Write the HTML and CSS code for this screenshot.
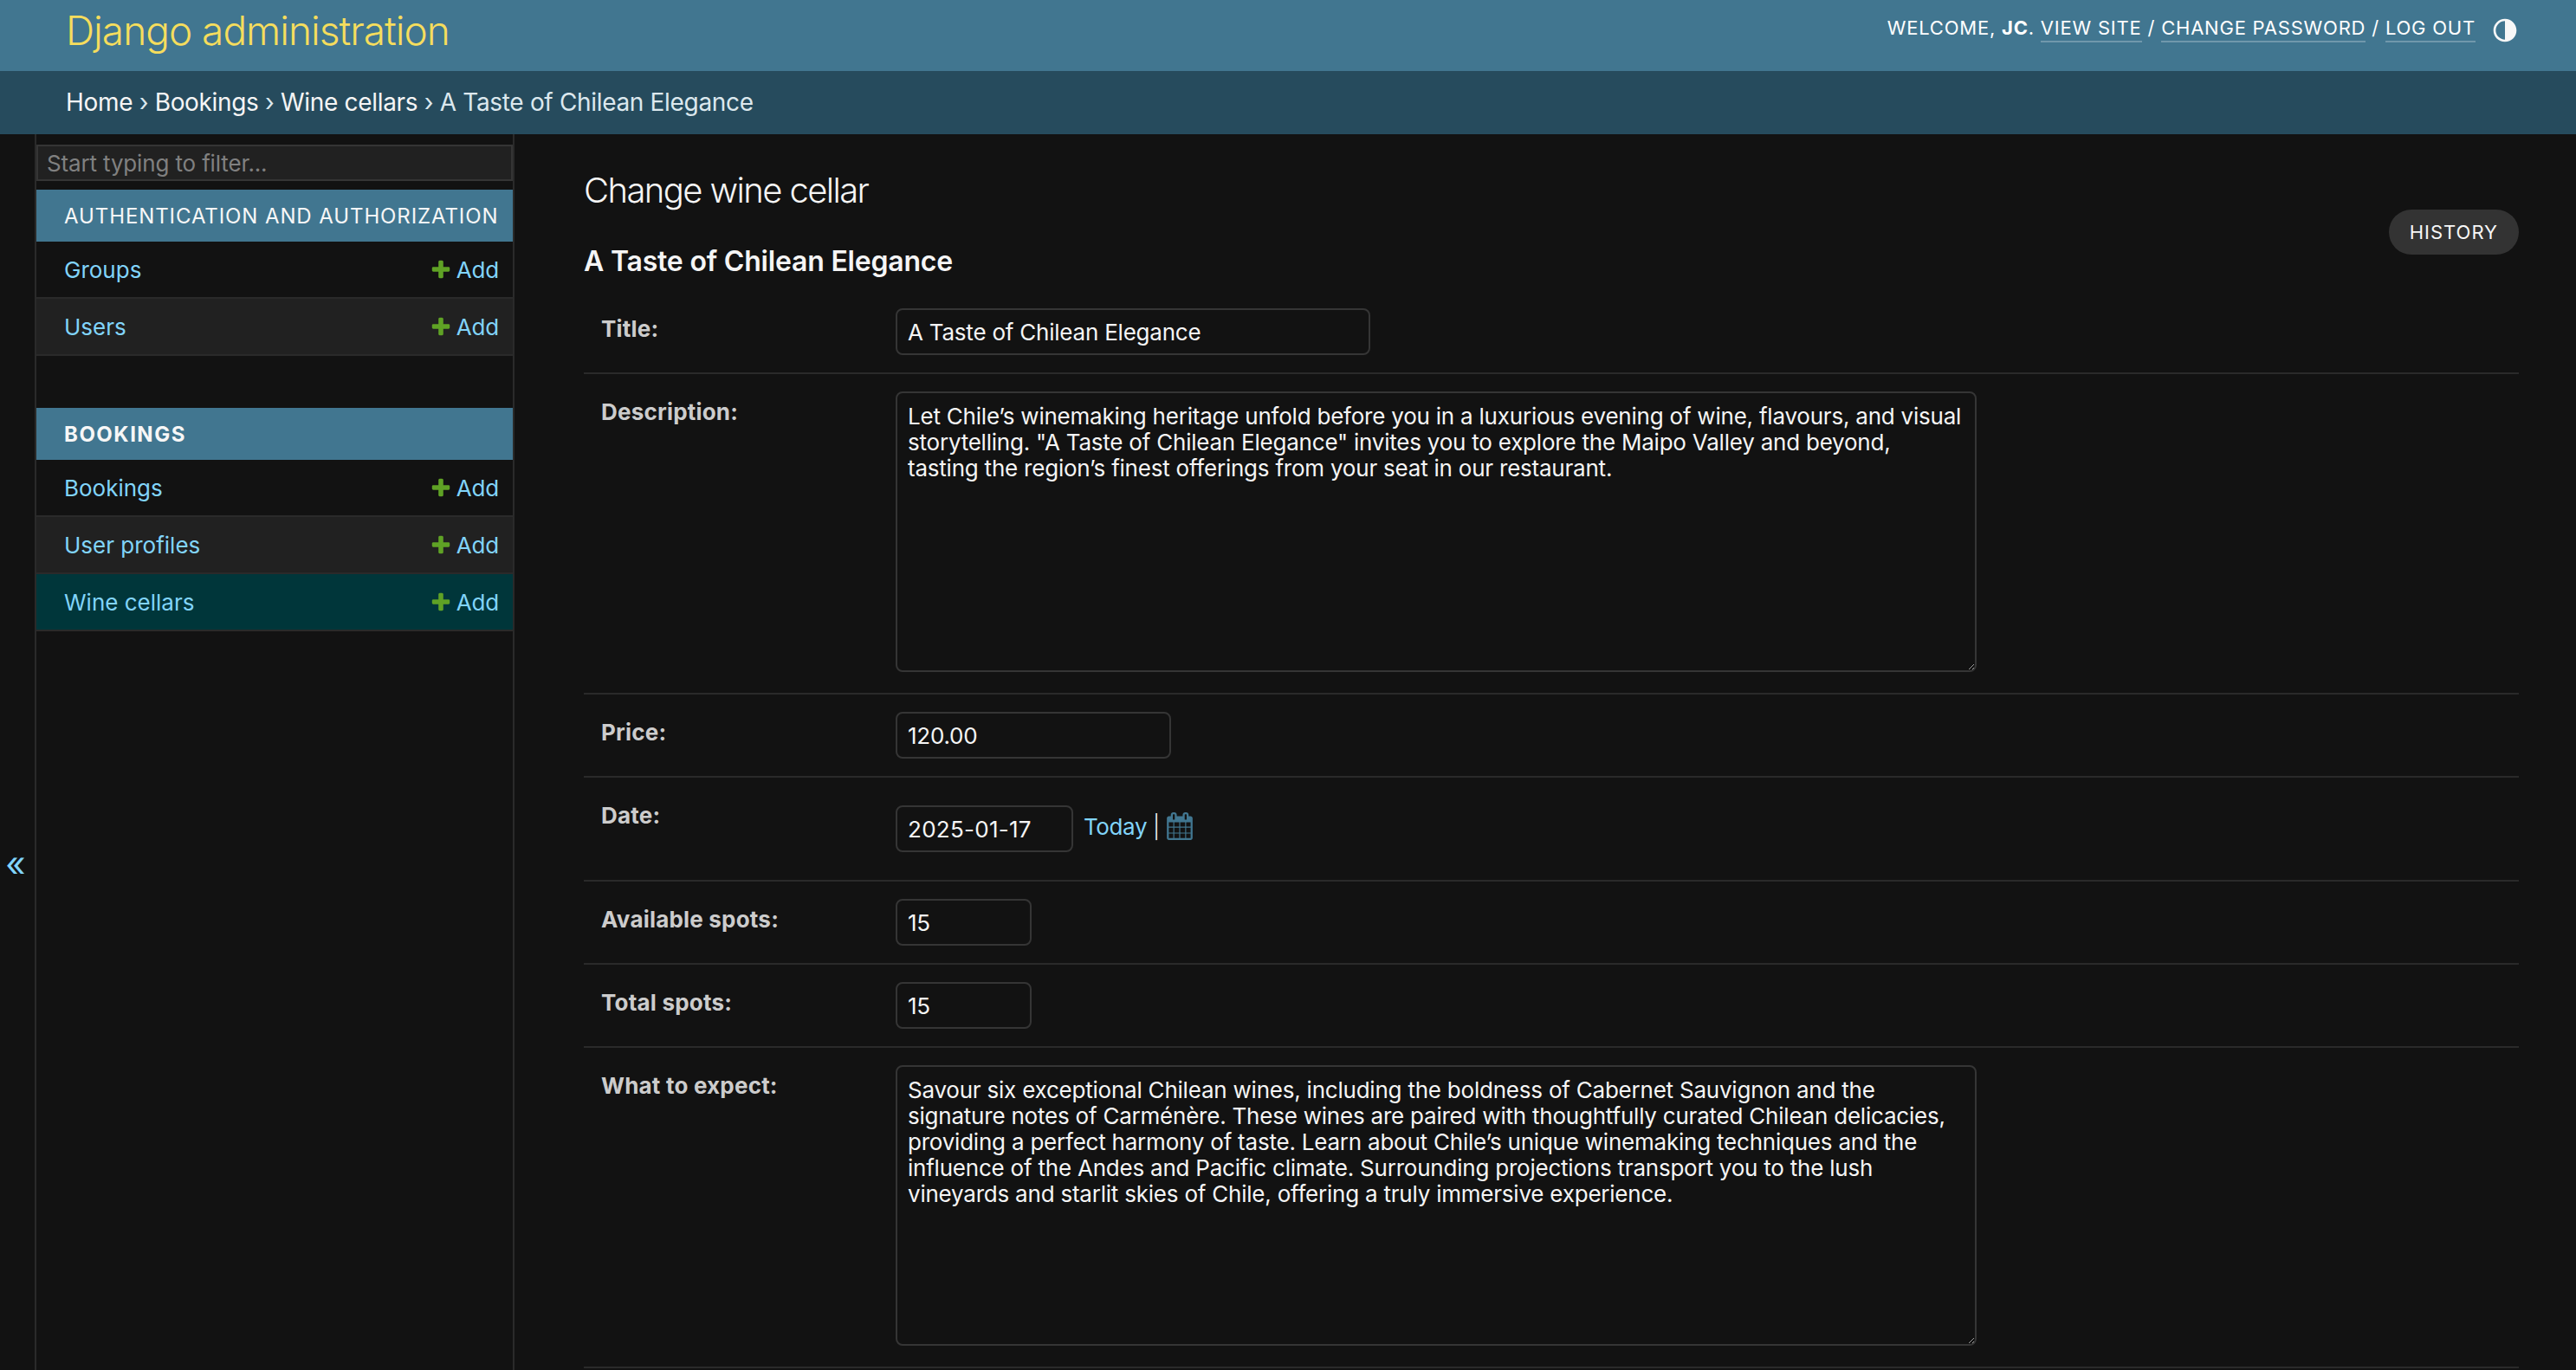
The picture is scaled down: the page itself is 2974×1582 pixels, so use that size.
FILE: index.html
```html
<!DOCTYPE html>
<html>
<head lang="en">
    <meta charset="UTF-8">
    <title>Change wine cellar | Django site admin</title>
    <link rel="stylesheet" href="styles.css">
</head>
<body>
<div class="page">
    <div class="header">
        <h1 class="branding"><a href="#">Django administration</a></h1>
        <div class="user-tools">
            <div>Welcome, <strong>JC</strong>. <a href="#">View site</a> / <a href="#">Change password</a> / <a href="#">Log out</a></div>
            <svg class="theme-icon" viewBox="0 0 24 24"><path d="M12 22C6.477 22 2 17.523 2 12S6.477 2 12 2s10 4.477 10 10-4.477 10-10 10zm0-2V4a8 8 0 1 0 0 16z"/></svg>
        </div>
    </div>
    <div class="breadcrumbs">
        <a href="#">Home</a> › <a href="#">Bookings</a> › <a href="#">Wine cellars</a> › A Taste of Chilean Elegance
    </div>
    <div class="main">
        <div class="toggle-nav">«</div>
        <div class="sidebar">
            <input class="nav-filter" type="text" placeholder="Start typing to filter...">
            <div class="app-module">
                <div class="caption">Authentication and Authorization</div>
                <div class="model-row">
                    <a href="#">Groups</a>
                    <a href="#" class="addlink"><svg viewBox="0 0 1792 1792"><path d="M1600 796v192q0 40-28 68t-68 28h-416v416q0 40-28 68t-68 28h-192q-40 0-68-28t-28-68v-416h-416q-40 0-68-28t-28-68v-192q0-40 28-68t68-28h416v-416q0-40 28-68t68-28h192q40 0 68 28t28 68v416h416q40 0 68 28t28 68z"/></svg>Add</a>
                </div>
                <div class="model-row alt">
                    <a href="#">Users</a>
                    <a href="#" class="addlink"><svg viewBox="0 0 1792 1792"><path d="M1600 796v192q0 40-28 68t-68 28h-416v416q0 40-28 68t-68 28h-192q-40 0-68-28t-28-68v-416h-416q-40 0-68-28t-28-68v-192q0-40 28-68t68-28h416v-416q0-40 28-68t68-28h192q40 0 68 28t28 68v416h416q40 0 68 28t28 68z"/></svg>Add</a>
                </div>
            </div>
            <div class="app-module">
                <div class="caption bold">Bookings</div>
                <div class="model-row">
                    <a href="#">Bookings</a>
                    <a href="#" class="addlink"><svg viewBox="0 0 1792 1792"><path d="M1600 796v192q0 40-28 68t-68 28h-416v416q0 40-28 68t-68 28h-192q-40 0-68-28t-28-68v-416h-416q-40 0-68-28t-28-68v-192q0-40 28-68t68-28h416v-416q0-40 28-68t68-28h192q40 0 68 28t28 68v416h416q40 0 68 28t28 68z"/></svg>Add</a>
                </div>
                <div class="model-row alt">
                    <a href="#">User profiles</a>
                    <a href="#" class="addlink"><svg viewBox="0 0 1792 1792"><path d="M1600 796v192q0 40-28 68t-68 28h-416v416q0 40-28 68t-68 28h-192q-40 0-68-28t-28-68v-416h-416q-40 0-68-28t-28-68v-192q0-40 28-68t68-28h416v-416q0-40 28-68t68-28h192q40 0 68 28t28 68v416h416q40 0 68 28t28 68z"/></svg>Add</a>
                </div>
                <div class="model-row current">
                    <a href="#">Wine cellars</a>
                    <a href="#" class="addlink"><svg viewBox="0 0 1792 1792"><path d="M1600 796v192q0 40-28 68t-68 28h-416v416q0 40-28 68t-68 28h-192q-40 0-68-28t-28-68v-416h-416q-40 0-68-28t-28-68v-192q0-40 28-68t68-28h416v-416q0-40 28-68t68-28h192q40 0 68 28t28 68v416h416q40 0 68 28t28 68z"/></svg>Add</a>
                </div>
            </div>
        </div>
        <div class="content">
            <div class="title-bar">
                <div>
                    <h1 class="page-title">Change wine cellar</h1>
                    <h2 class="object-title">A Taste of Chilean Elegance</h2>
                </div>
                <a href="#" class="history">History</a>
            </div>
            <div class="form-row">
                <label class="field-label">Title:</label>
                <input class="field title-input" type="text" value="A Taste of Chilean Elegance">
            </div>
            <div class="form-row">
                <label class="field-label">Description:</label>
                <textarea class="field area">Let Chile’s winemaking heritage unfold before you in a luxurious evening of wine, flavours, and visual storytelling. "A Taste of Chilean Elegance" invites you to explore the Maipo Valley and beyond, tasting the region’s finest offerings from your seat in our restaurant.</textarea>
            </div>
            <div class="form-row">
                <label class="field-label">Price:</label>
                <input class="field price-input" type="text" value="120.00">
            </div>
            <div class="form-row date-row">
                <label class="field-label">Date:</label>
                <input class="field date-input" type="text" value="2025-01-17">
                <span class="date-shortcuts"><a href="#">Today</a> | <a href="#" class="cal-link"><svg viewBox="0 0 1792 1792"><path d="M192 1664h288v-288h-288v288zm352 0h320v-288h-320v288zm-352-352h288v-320h-288v320zm352 0h320v-320h-320v320zm-352-384h288v-288h-288v288zm736 736h320v-288h-320v288zm-384-736h320v-288h-320v288zm768 736h288v-288h-288v288zm-384-352h320v-320h-320v320zm-352-864v-288q0-13-9.5-22.5t-22.5-9.5h-64q-13 0-22.5 9.5t-9.5 22.5v288q0 13 9.5 22.5t22.5 9.5h64q13 0 22.5-9.5t9.5-22.5zm736 864h288v-320h-288v320zm-384-384h320v-288h-320v288zm384 0h288v-288h-288v288zm32-480v-288q0-13-9.5-22.5t-22.5-9.5h-64q-13 0-22.5 9.5t-9.5 22.5v288q0 13 9.5 22.5t22.5 9.5h64q13 0 22.5-9.5t9.5-22.5zm384-64v1280q0 52-38 90t-90 38h-1408q-52 0-90-38t-38-90v-1280q0-52 38-90t90-38h128v-96q0-66 47-113t113-47h64q66 0 113 47t47 113v96h384v-96q0-66 47-113t113-47h64q66 0 113 47t47 113v96h128q52 0 90 38t38 90z"/></svg></a></span>
            </div>
            <div class="form-row">
                <label class="field-label">Available spots:</label>
                <input class="field spots-input" type="text" value="15">
            </div>
            <div class="form-row">
                <label class="field-label">Total spots:</label>
                <input class="field spots-input" type="text" value="15">
            </div>
            <div class="form-row">
                <label class="field-label">What to expect:</label>
                <textarea class="field area">Savour six exceptional Chilean wines, including the boldness of Cabernet Sauvignon and the signature notes of Carménère. These wines are paired with thoughtfully curated Chilean delicacies, providing a perfect harmony of taste. Learn about Chile’s unique winemaking techniques and the influence of the Andes and Pacific climate. Surrounding projections transport you to the lush vineyards and starlit skies of Chile, offering a truly immersive experience.</textarea>
            </div>
        </div>
    </div>
</div>
</body>
</html>
```

FILE: styles.css
```css
* {
    margin: 0;
    padding: 0;
    box-sizing: border-box;
}

html, body {
    height: 100%;
    overflow: hidden;
}

body {
    background-color: #121212;
    color: #f5f5f5;
    font-family: Inter, "Liberation Sans", sans-serif;
    font-size: 28px;
}

a {
    text-decoration: none;
    color: #81d4fa;
}

.page {
    display: flex;
    flex-direction: column;
    height: 1582px;
}

/* top bars */
.header {
    display: flex;
    justify-content: space-between;
    height: 82px;
    flex: none;
    padding: 0 66px 0 76px;
    background-color: #417690;
}

.branding {
    font-size: 46px;
    font-weight: 300;
    line-height: 71px;
    letter-spacing: -1px;
}

.branding a {
    color: #f5dd5d;
}

.user-tools {
    display: flex;
    align-items: flex-start;
    padding-top: 18px;
    font-size: 22px;
    line-height: 28px;
    letter-spacing: 0.78px;
    text-transform: uppercase;
    color: #fff;
    white-space: nowrap;
}

.user-tools strong {
    font-weight: 700;
}

.user-tools a {
    padding-bottom: 2px;
    color: #fff;
    border-bottom: 2px solid rgba(255, 255, 255, 0.25);
}

.theme-icon {
    width: 32px;
    height: 32px;
    margin-top: 1px;
    margin-left: 18px;
    fill: #f7f7f7;
}

.breadcrumbs {
    height: 73px;
    flex: none;
    padding-left: 76px;
    background-color: #264b5d;
    color: #dce8ee;
    line-height: 72px;
    letter-spacing: -0.33px;
}

.breadcrumbs a {
    color: #f5f5f5;
}

/* layout */
.main {
    display: flex;
    flex: 1;
    min-height: 0;
}

.toggle-nav {
    display: flex;
    align-items: center;
    justify-content: center;
    width: 42px;
    flex: none;
    padding-top: 258px;
    padding-right: 4px;
    border-right: 2px solid #2a2a2a;
    color: #81d4fa;
    font-size: 40px;
}

.sidebar {
    width: 552px;
    flex: none;
    padding-top: 12px;
    border-right: 2px solid #2a2a2a;
}

.nav-filter {
    display: block;
    width: 550px;
    height: 42px;
    margin-bottom: 10px;
    padding: 0 10px;
    border: 2px solid #353535;
    background-color: #212121;
    color: #f5f5f5;
    font-family: inherit;
    font-size: 26px;
    letter-spacing: -0.15px;
}

.nav-filter::placeholder {
    color: #808080;
}

.app-module {
    width: 550px;
    margin-bottom: 60px;
}

.caption {
    height: 60px;
    padding-left: 32px;
    background-color: #417690;
    color: #f7f7f7;
    font-size: 24px;
    line-height: 61px;
    letter-spacing: 0.9px;
    text-transform: uppercase;
    white-space: nowrap;
}

.caption.bold {
    font-weight: 700;
    letter-spacing: 1.5px;
}

.model-row {
    display: flex;
    align-items: center;
    justify-content: space-between;
    height: 66px;
    padding: 0 16px 0 32px;
    border-bottom: 2px solid #2a2a2a;
    font-size: 26px;
}

.model-row.alt {
    background-color: #212121;
}

.model-row.current {
    background-color: #00363a;
}

.addlink {
    display: flex;
    align-items: center;
    gap: 5px;
    letter-spacing: -0.2px;
}

.addlink svg {
    width: 26px;
    height: 26px;
    fill: #5fa225;
}

/* form */
.content {
    flex: 1;
    min-width: 0;
    padding: 0 66px 0 80px;
}

.title-bar {
    display: flex;
    align-items: flex-start;
    justify-content: space-between;
    height: 181px;
    padding-top: 40px;
}

.page-title {
    font-size: 40px;
    font-weight: 300;
    line-height: 50px;
    margin-bottom: 37px;
    letter-spacing: -1.6px;
}

.object-title {
    font-size: 32px;
    font-weight: 600;
    line-height: 40px;
    letter-spacing: -0.2px;
}

.history {
    margin-top: 47px;
    padding: 0 24px;
    height: 52px;
    border-radius: 26px;
    background-color: #333;
    color: #f7f7f7;
    font-size: 22px;
    line-height: 52px;
    letter-spacing: 1px;
    text-transform: uppercase;
}

.form-row {
    display: flex;
    align-items: flex-start;
    padding: 20px 0 20px 20px;
    border-bottom: 2px solid #2a2a2a;
}

.form-row.date-row {
    padding: 32px 0 32px 20px;
}

.field-label {
    width: 340px;
    flex: none;
    padding-top: 9px;
    color: #ccc;
    font-size: 26px;
    font-weight: 700;
    line-height: 30px;
    letter-spacing: 0.2px;
}

.date-row .field-label {
    margin-top: -12px;
}

.field {
    display: block;
    height: 54px;
    padding: 6px 12px;
    border: 2px solid #353535;
    border-radius: 8px;
    background-color: #121212;
    color: #f5f5f5;
    font-family: inherit;
    font-size: 26px;
    line-height: 30px;
    letter-spacing: -0.22px;
}

.title-input {
    width: 548px;
}

.price-input {
    width: 318px;
}

.field.date-input {
    width: 205px;
    letter-spacing: 0.27px;
}

.spots-input {
    width: 157px;
}

.area {
    width: 1248px;
    height: 324px;
    margin-bottom: 4px;
    padding: 12px 14px 10px 12px;
    overflow: hidden;
    color-scheme: dark;
}

.date-shortcuts {
    display: flex;
    align-items: center;
    height: 48px;
    margin-left: 12px;
    color: #f5f5f5;
    font-size: 26px;
    font-weight: 300;
    letter-spacing: -0.4px;
    white-space: pre;
}

.date-shortcuts a:first-child {
    font-weight: 400;
}

.cal-link {
    display: flex;
}

.cal-link svg {
    width: 32px;
    height: 32px;
    fill: #417690;
}
```
